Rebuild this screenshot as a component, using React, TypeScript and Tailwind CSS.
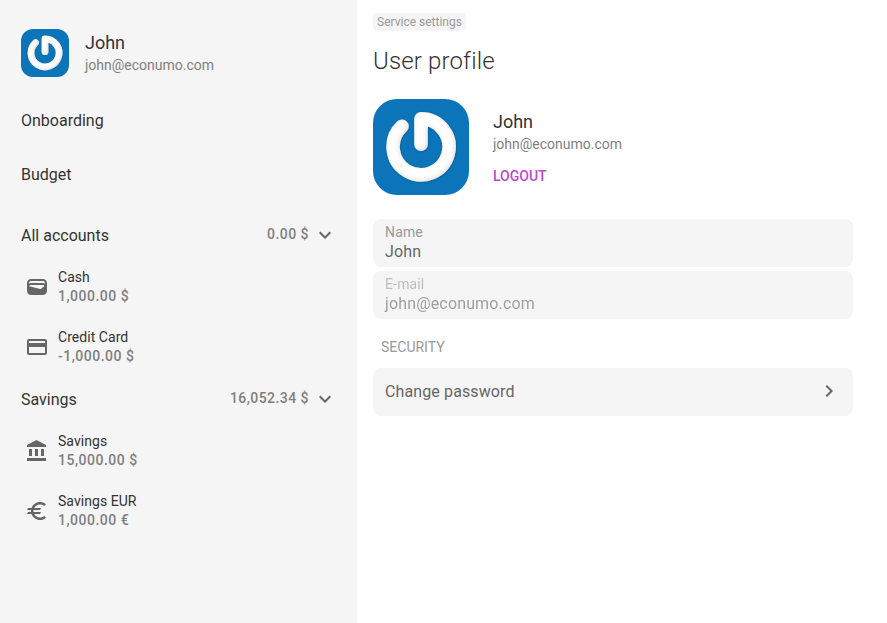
import type { ComponentType } from "react";
import { MdChevronRight, MdCreditCard, MdExpandMore, MdWallet } from "react-icons/md";

type IconComponent = ComponentType<{ className?: string }>;

function BankIcon({ className }: { className?: string }) {
  return (
    <svg viewBox="0 0 24 24" className={className} fill="currentColor" aria-hidden="true">
      <path d="M4 10v7h3v-7H4zm6 0v7h3v-7h-3zM2 22h19v-3H2v3zm14-12v7h3v-7h-3zm-4.500-9L2 6v2h19V6l-9.500-5z" />
    </svg>
  );
}

function EuroIcon({ className }: { className?: string }) {
  return (
    <svg viewBox="0 0 24 24" className={className} fill="currentColor" aria-hidden="true">
      <path d="M15 18.5c-2.510 0-4.680-1.420-5.760-3.500H15l1-2H8.580c-.05-.33-.08-.66-.08-1s.03-.67.08-1H15l1-2H9.240C10.320 6.920 12.500 5.500 15 5.500c1.610 0 3.090.59 4.230 1.570L21 5.300C19.410 3.870 17.300 3 15 3c-3.920 0-7.240 2.510-8.480 6H3l-1 2h4.060c-.04.33-.06.66-.06 1s.02.67.06 1H3l-1 2h4.520c1.240 3.490 4.560 6 8.480 6 2.310 0 4.410-.87 6-2.300l-1.780-1.770c-1.130.98-2.600 1.570-4.220 1.570z" />
    </svg>
  );
}

function Avatar({ className }: { className: string }) {
  return (
    <svg viewBox="0 0 96 96" className={className} aria-hidden="true">
      <defs>
        <filter id="relief" x="-20%" y="-20%" width="140%" height="140%">
          <feGaussianBlur in="SourceAlpha" stdDeviation="2.4" result="soft" />
          <feOffset in="soft" dx="-1.4" dy="-1.2" result="shifted" />
          <feComposite in="SourceAlpha" in2="shifted" operator="out" result="edge" />
          <feFlood floodColor="#a8a29e" floodOpacity="0.45" />
          <feComposite in2="edge" operator="in" result="shade" />
          <feDropShadow in="SourceGraphic" dx="0.3" dy="0.5" stdDeviation="0.8" floodColor="#03365c" floodOpacity="0.45" result="base" />
          <feMerge>
            <feMergeNode in="base" />
            <feMergeNode in="shade" />
          </feMerge>
        </filter>
      </defs>
      <rect width="96" height="96" fill="#0c75b9" />
      <path
        d="M29 27.3A28 28 0 1 0 48 19.8V45.3"
        fill="none"
        stroke="#fff"
        strokeWidth="13.6"
        strokeLinecap="round"
        strokeLinejoin="round"
        filter="url(#relief)"
      />
    </svg>
  );
}

function GroupHeader({ name, total }: { name: string; total: string }) {
  return (
    <div className="flex h-11 items-center pr-5 pl-[21px]">
      <span className="grow text-base leading-6 text-[#333]">{name}</span>
      <span className="mr-1 pb-1 text-sm leading-5 font-medium tracking-[0.45px] text-[#808080]">{total}</span>
      <MdExpandMore className="mb-0.5 size-6 text-[#666]" />
    </div>
  );
}

function Account({ icon: Icon, name, amount }: { icon: IconComponent; name: string; amount: string }) {
  return (
    <div className="flex h-[60px] items-center pb-0.5 pl-[25px]">
      <Icon className="size-6 text-[#666]" />
      <div className="ml-[9px] flex flex-col">
        <span className="text-sm leading-[19px] tracking-[0.05px] text-[#333]">{name}</span>
        <span className="text-sm leading-[19px] font-medium tracking-[0.5px] text-[#808080]">{amount}</span>
      </div>
    </div>
  );
}

function Field({ label, value, disabled }: { label: string; value: string; disabled?: boolean }) {
  return (
    <div className="h-12 rounded-lg bg-[#f5f5f5] px-3 pt-1">
      <div className={disabled ? "opacity-60" : ""}>
        <div className="text-sm leading-[18px] tracking-[0.15px] text-[#999]">{label}</div>
        <div className="text-base leading-[22px] tracking-[0.15px] text-[#666]">{value}</div>
      </div>
    </div>
  );
}

export default function App() {
  return (
    <div className="flex h-[623px] w-[887px] overflow-hidden bg-white font-[Roboto,sans-serif]">
      <aside className="w-[357px] shrink-0 bg-[#f5f5f5]">
        <div className="flex items-center gap-4 pt-[29px] pl-[21px]">
          <Avatar className="size-12 rounded-xl" />
          <div>
            <div className="text-lg leading-6 text-[#333]">John</div>
            <div className="text-sm leading-5 text-[#808080]">john@econumo.com</div>
          </div>
        </div>
        <nav className="mt-[17px] flex flex-col pl-[21px] text-base text-[#333]">
          <a className="flex h-[54px] items-center">Onboarding</a>
          <a className="flex h-[54px] items-center">Budget</a>
        </nav>
        <div className="mt-3">
          <GroupHeader name="All accounts" total="0.00 $" />
          <Account icon={MdWallet} name="Cash" amount="1,000.00 $" />
          <Account icon={MdCreditCard} name="Credit Card" amount="-1,000.00 $" />
          <GroupHeader name="Savings" total="16,052.34 $" />
          <Account icon={BankIcon} name="Savings" amount="15,000.00 $" />
          <Account icon={EuroIcon} name="Savings EUR" amount="1,000.00 €" />
        </div>
      </aside>
      <main className="w-[496px] pt-[13px] pl-4">
        <div className="flex">
          <span className="rounded bg-[#f5f5f5] px-1 text-xs leading-[18px] text-[#999]">
            Service settings
          </span>
        </div>
        <h1 className="mt-3.5 text-2xl leading-8 font-light tracking-[0.15px] text-[#333]">User profile</h1>
        <section className="mt-[22px] flex gap-6">
          <Avatar className="size-24 rounded-3xl" />
          <div className="pt-[11px]">
            <div className="text-lg leading-6 text-[#333]">John</div>
            <div className="text-sm leading-5 text-[#808080]">john@econumo.com</div>
            <button className="mt-3 block text-sm leading-5 font-medium text-[#b94ad0]">LOGOUT</button>
          </div>
        </section>
        <div className="mt-6 flex flex-col gap-1">
          <Field label="Name" value="John" />
          <Field label="E-mail" value="john@econumo.com" disabled />
        </div>
        <h2 className="mt-[18px] pl-2 text-sm leading-5 text-[#999]">SECURITY</h2>
        <button className="mt-[11px] flex h-12 w-full items-center justify-between rounded-lg bg-[#f5f5f5] px-3 text-[#666]">
          <span className="text-base leading-6 tracking-[0.12px]">Change password</span>
          <MdChevronRight className="mb-0.5 size-6" />
        </button>
      </main>
    </div>
  );
}
